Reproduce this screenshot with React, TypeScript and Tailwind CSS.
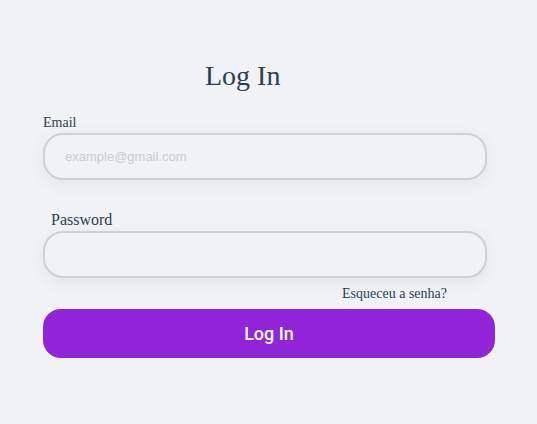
import React, { useState } from "react";

const App: React.FC = () => {
  const [email, setEmail] = useState("");
  const [password, setPassword] = useState("");

  return (
    <section className="min-h-screen bg-[#f0f2f5] font-['Liberation_Serif',serif] text-[#2c3e50]">
      <div className="pt-[60px] pl-[43px]">
        <h1 className="pl-[162px] text-[28px] leading-[32px]">Log In</h1>

        <label className="mt-[23px] block text-[14px] leading-[16px]">Email</label>
        <input
          type="email"
          value={email}
          onChange={(e) => setEmail(e.target.value)}
          placeholder="example@gmail.com"
          className="mt-[2px] block h-[47px] w-[444px] rounded-[20px] border-2 border-[#cdd0d6] bg-[#f0f2f5] px-[20px] font-['Liberation_Sans',sans-serif] text-[13px] text-[#2c3e50] shadow-[0_4px_18px_rgba(0,0,0,0.06)] outline-none placeholder:text-[#c9ccd3]"
        />

        <label className="mt-[31px] block pl-[8px] text-[16px] leading-[18px]">Password</label>
        <input
          type="password"
          value={password}
          onChange={(e) => setPassword(e.target.value)}
          className="mt-[2px] block h-[47px] w-[444px] rounded-[20px] border-2 border-[#cdd0d6] bg-[#f0f2f5] px-[20px] font-['Liberation_Sans',sans-serif] text-[13px] shadow-[0_4px_18px_rgba(0,0,0,0.06)] outline-none"
        />

        <p className="mt-[8px] w-[444px] pr-[40px] text-right text-[14px] leading-[16px]">
          <a href="#">Esqueceu a senha?</a>
        </p>

        <button className="mt-[7px] h-[49px] w-[452px] rounded-[18px] bg-[#9224d8] font-['Roboto',sans-serif] text-[18px] font-medium text-white">
          Log In
        </button>
      </div>
    </section>
  );
};

export default App;
